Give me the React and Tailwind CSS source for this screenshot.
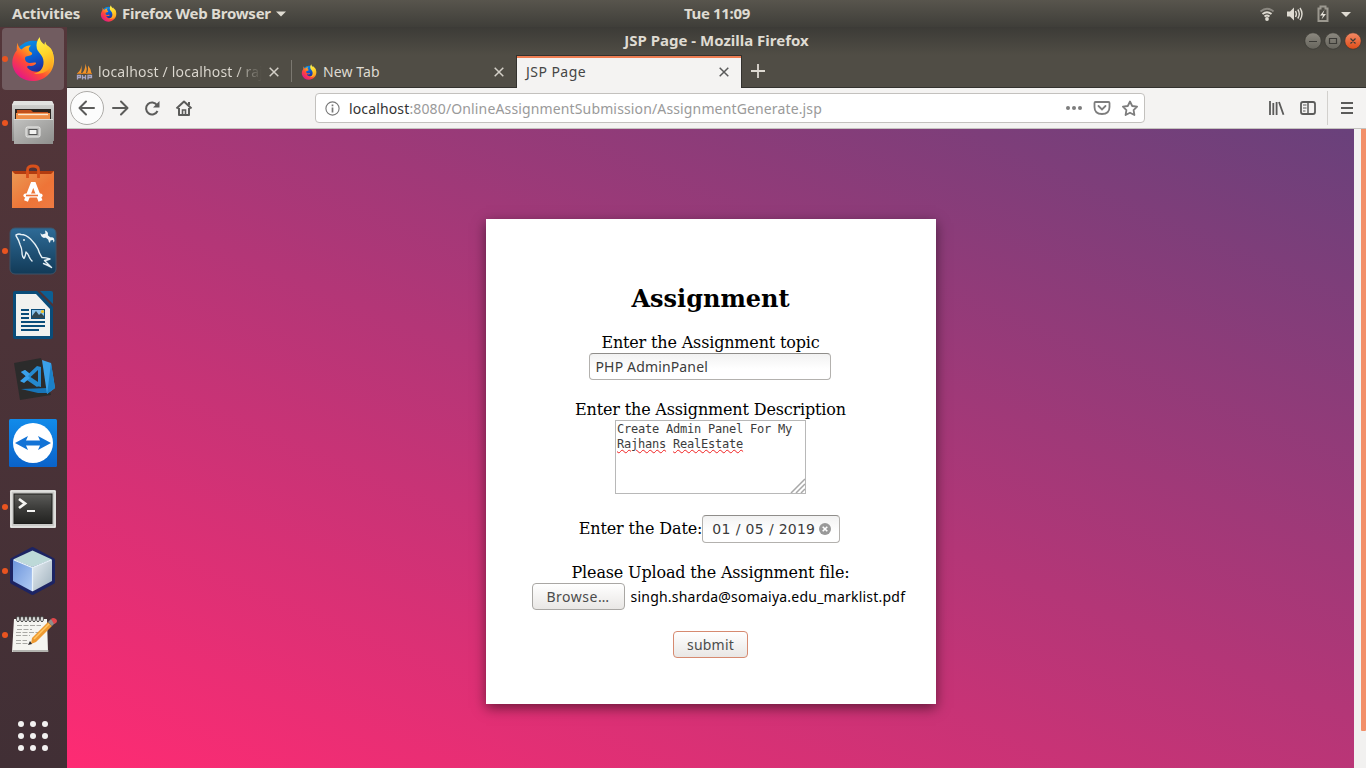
import React from "react";

const UI = "font-['Noto_Sans',sans-serif]";

function Firefox({ size, id }) {
  return (
    <svg width={size} height={size} viewBox="0 0 48 48" className="shrink-0">
      <defs>
        <linearGradient id={id + "a"} x1="0.85" y1="0.1" x2="0.15" y2="0.9">
          <stop offset="0" stopColor="#ffe836" />
          <stop offset="0.35" stopColor="#ffa01e" />
          <stop offset="0.62" stopColor="#ff4a36" />
          <stop offset="1" stopColor="#e3158a" />
        </linearGradient>
        <linearGradient id={id + "b"} x1="0.2" y1="0" x2="0.6" y2="1">
          <stop offset="0" stopColor="#0a96e8" />
          <stop offset="0.5" stopColor="#0a5cd0" />
          <stop offset="1" stopColor="#2b1a86" />
        </linearGradient>
        <linearGradient id={id + "c"} x1="0.3" y1="0" x2="0.6" y2="1">
          <stop offset="0" stopColor="#fff44f" />
          <stop offset="0.5" stopColor="#ffd42a" />
          <stop offset="1" stopColor="#ff9a1c" />
        </linearGradient>
      </defs>
      <circle cx="24" cy="24" r="19" fill={`url(#${id}b)`} />
      <path
        d="M8 7c-1 3-1 5-1 8C3 20 1.500 26 3 32c2.500 9 11 15 20.500 15C36 47 46 38 46 25c0-4-1-8-3-10 0 10-1 15-6 19-4 4-13 5-18 0-2-2-1-3 1-3 5 1 8-2 7-3-2-1-5 1-8 0-3-1-4-4-3-6 2-2 6-1 7-3 1-2-3-3-3-4-1-3 1-4 2-5-5-1-8 2-10 4-2-1-4-4-4-7z"
        fill={`url(#${id}a)`}
      />
      <path
        d="M31 1c-3 4-4 7-3 12 1 4 7 7 7 14 0 7-4 11-10 12 10 2 19-4 20-14 1-10-3-13-6-15-1-1-2-2-2-4-1 1-1 2-1 3-3-2-5-5-5-8z"
        fill={`url(#${id}c)`}
      />
    </svg>
  );
}

function Files() {
  return (
    <svg width="48" height="48" viewBox="0 0 48 48">
      <defs>
        <linearGradient id="fa" x1="0" y1="0" x2="0" y2="1">
          <stop offset="0" stopColor="#d6d6d4" />
          <stop offset="1" stopColor="#8c8c8a" />
        </linearGradient>
        <linearGradient id="fb" x1="0" y1="0" x2="1" y2="1">
          <stop offset="0" stopColor="#c2c2c0" />
          <stop offset="1" stopColor="#8f8f8d" />
        </linearGradient>
      </defs>
      <path d="M5 2h38l2 4v36H3V6z" fill="url(#fa)" />
      <path d="M5 2h38l2 4H3z" fill="#e2e2e0" />
      <path d="M6 10h36v12H6z" fill="#2b2522" />
      <path d="M8 11h14l2 2h15v7H8z" fill="#c14f1c" />
      <path d="M7 14h34v6H7z" fill="#ef8e48" />
      <path d="M9 15.500h30" stroke="#fbe9d4" strokeWidth="1.300" />
      <path d="M5 20h39v25H5z" fill="url(#fb)" />
      <path d="M5 20.500h39" stroke="#dcdcda" />
      <rect x="17" y="28" width="14" height="10" rx="1.500" fill="#bdbdbb" stroke="#ececea" strokeWidth="1" />
      <rect x="20" y="30.500" width="8" height="5" fill="#f2f2f0" stroke="#555" strokeWidth="1" />
    </svg>
  );
}

function Software() {
  return (
    <svg width="48" height="48" viewBox="0 0 48 48">
      <defs>
        <linearGradient id="sa" x1="0" y1="0" x2="1" y2="1">
          <stop offset="0" stopColor="#ea9a55" />
          <stop offset="0.6" stopColor="#ee7437" />
          <stop offset="1" stopColor="#ef7a43" />
        </linearGradient>
      </defs>
      <path d="M3 8h42v4H3z" fill="#b33c10" />
      <path d="M3 8l3 3h36l3-3v37H3z" fill="url(#sa)" />
      <path d="M18.500 15V7q0-4 5.500-4t5.500 4v8" fill="none" stroke="#d8501b" strokeWidth="2.800" />
      <path d="M17 38l6.500-17h1.500l6.500 17" fill="none" stroke="#fff" strokeWidth="4.200" />
      <path d="M16.500 32.500h15" stroke="#fff" strokeWidth="4.200" strokeLinecap="round" />
      <path d="M17 32.500h12" stroke="#ee7437" strokeWidth="1.600" />
    </svg>
  );
}

function MySql() {
  return (
    <svg width="48" height="48" viewBox="0 0 48 48">
      <defs>
        <linearGradient id="ma" x1="0" y1="0" x2="0" y2="1">
          <stop offset="0" stopColor="#2e6b97" />
          <stop offset="1" stopColor="#123a57" />
        </linearGradient>
      </defs>
      <rect x="1" y="1" width="46" height="46" rx="5" fill="url(#ma)" stroke="#3c5368" />
      <path
        d="M23 34q-2-2-3-4.500-1-3-3-4.500-0.500 4-2 6.500-2-2-2-6 0-4-2-8-1-4-3-7-2-3 0-3 2-1 4 0 5 0 9.500 4.500 5 5 7.500 10 1.500 5 4 8.500 4 0 8 1.500-3 1-5.500 1.500 3 3 7 7-4-2.500-8-4"
        fill="none"
        stroke="#e6f0f5"
        strokeWidth="1.400"
        strokeLinejoin="round"
        strokeLinecap="round"
      />
      <circle cx="15" cy="13" r="0.900" fill="#fff" />
      <path d="M36 8l5.500 4.500" stroke="#eef4f7" strokeWidth="3" />
      <path d="M36 3.500l0.500 3-3.500 1-1.500-1.500q0 4 3.500 5 4-0.500 4-4 0-2.500-3-3.500z" fill="#eef4f7" />
      <path d="M44.500 15.500l-0.500-2.500-2.500 0.500-0.500 2.500q-2.500-2-1-4.500 3-2.500 5 0 1 2-0.500 4z" fill="#eef4f7" />
    </svg>
  );
}

function Writer() {
  return (
    <svg width="48" height="48" viewBox="0 0 48 48">
      <path d="M6 0h22l16 16v30q0 2-2 2H6q-2 0-2-2V2q0-2 2-2z" fill="#0a4c79" />
      <path d="M31 0h11q2 0 2 2v11z" fill="#0d5f93" />
      <path d="M7 3h20l14 15v27H7z" fill="#f1f1ef" />
      <path d="M12 19h8M12 23h8M12 27h8M12 31h24M12 35h24M12 39h18" stroke="#0a4c79" strokeWidth="2" />
      <rect x="22.500" y="18.500" width="13" height="9" fill="#8cc4ea" stroke="#0a4c79" />
      <path d="M23 27v-2l4-5 3 4 2-2 3 3v2z" fill="#33474f" />
      <circle cx="33.500" cy="20.500" r="1.600" fill="#f3c321" />
    </svg>
  );
}

function Code() {
  return (
    <svg width="48" height="48" viewBox="0 0 48 48">
      <path d="M5 8L32 3l10 37-31 5z" fill="#2b2b2b" />
      <path d="M12 34l26-1 7-1-7 6-9 0z" fill="#1874b8" />
      <path d="M33 5l9 3 4 25-8 6z" fill="#3aa0ea" />
      <path d="M42 8l4 25-8 6 1-7z" fill="#1b80c8" />
      <path d="M12 17l4-2 16 12v5l-4-1zM12 26l16-15 4 1v17l-4 3-13-9-2 4z" fill="#2589cf" />
      <path d="M21.500 22l7.500-7v12z" fill="#2b2b2b" />
      <path d="M12 17l4-2 5 4-3 3zM11 26l7-6 3 3-6 5z" fill="#3aa0ea" />
    </svg>
  );
}

function TeamViewer() {
  return (
    <svg width="48" height="48" viewBox="0 0 48 48">
      <defs>
        <linearGradient id="ta" x1="0" y1="0" x2="0" y2="1">
          <stop offset="0" stopColor="#118bea" />
          <stop offset="1" stopColor="#0a62c9" />
        </linearGradient>
      </defs>
      <rect width="48" height="48" rx="1.500" fill="url(#ta)" />
      <circle cx="24" cy="24" r="20" fill="#fff" />
      <path d="M6 24l13-7-2 4.500h14L29 17l13 7-13 7 2-4.500H17l2 4.500z" fill="#1273d6" />
    </svg>
  );
}

function Terminal() {
  return (
    <svg width="48" height="48" viewBox="0 0 48 48">
      <defs>
        <linearGradient id="tb" x1="0" y1="0" x2="0" y2="1">
          <stop offset="0" stopColor="#5c5c5a" />
          <stop offset="0.500" stopColor="#3b3b39" />
          <stop offset="1" stopColor="#222220" />
        </linearGradient>
      </defs>
      <rect x="1" y="7" width="46" height="38" rx="1.500" fill="#c9c9c7" />
      <rect x="2" y="8" width="44" height="36" fill="none" stroke="#f2f2f0" />
      <rect x="5" y="11" width="38" height="29.500" fill="url(#tb)" stroke="#1c1c1b" />
      <path d="M10 16l6 4.500-6 4.500" fill="none" stroke="#f4f4f2" strokeWidth="2.800" />
      <path d="M18 28h8" stroke="#f4f4f2" strokeWidth="2" />
    </svg>
  );
}

function NetBeans() {
  return (
    <svg width="48" height="48" viewBox="0 0 48 48">
      <defs>
        <linearGradient id="na" x1="0" y1="0" x2="1" y2="1">
          <stop offset="0" stopColor="#6c94dc" />
          <stop offset="1" stopColor="#b3cdf3" />
        </linearGradient>
        <linearGradient id="nb" x1="0" y1="0" x2="1" y2="1">
          <stop offset="0" stopColor="#e6edf2" />
          <stop offset="1" stopColor="#9fb1bd" />
        </linearGradient>
      </defs>
      <path d="M23.500 2L44 13v22L23.500 46 3 35V13z" fill="#1d2463" stroke="#1d2463" strokeWidth="4" strokeLinejoin="round" />
      <path d="M23.500 3.500L43 12.500l-19.500 7.500L4 12.500z" fill="#bdd9d8" />
      <path d="M4 12.500l19.500 8V44.500L4 34z" fill="url(#na)" />
      <path d="M43 12.500l-19.500 8V44.500L43 34z" fill="url(#nb)" />
      <path d="M5 13l18.500 7.500L42 13M23.500 21v23" fill="none" stroke="#eaf3fa" strokeWidth="1.200" />
    </svg>
  );
}

function Notepad() {
  const rings = [9, 13, 17, 21, 25, 29, 33];
  return (
    <svg width="48" height="48" viewBox="0 0 48 48">
      <path d="M5 8h33l1 33H3z" fill="#f5f5f1" />
      <path d="M3.500 40h36" stroke="#9d9d99" strokeWidth="1.400" />
      {rings.map((x) => (
        <ellipse key={x} cx={x} cy="8" rx="1.400" ry="2.800" fill="#f8f8f8" stroke="#4d4d4b" strokeWidth="1" />
      ))}
      <path d="M8 14.500h24M8 18.500h15M7 21.500h22M7 24.500h14M7 29.500h11M7 32.500h14" stroke="#a9a9a5" strokeWidth="1" strokeDasharray="5 1.500" />
      <path d="M23 27L39 11l4 4-16 16-5 2z" fill="#ee9a31" />
      <path d="M25 28L40 13" stroke="#ffc766" strokeWidth="1.500" />
      <path d="M39 11l3-3 4 4-3 3z" fill="#8d8d8b" />
      <path d="M42 8q2-2 5 0 2 2 0 4l-2 1z" fill="#e0474c" />
      <path d="M21 30l-2 4 4-1z" fill="#2b2b2b" />
    </svg>
  );
}

const dock = [
  { el: <Firefox size={46} id="fd" />, dot: true, on: true },
  { el: <Files />, dot: true },
  { el: <Software /> },
  { el: <MySql />, dot: true },
  { el: <Writer /> },
  { el: <Code /> },
  { el: <TeamViewer /> },
  { el: <Terminal />, dot: true },
  { el: <NetBeans />, dot: true },
  { el: <Notepad />, dot: true },
];

function Dock() {
  return (
    <nav className="flex w-[67px] shrink-0 flex-col bg-linear-to-b from-[#54363a] to-[#412f35]">
      {dock.map((d, i) => (
        <div key={i} className="flex h-16 shrink-0 items-center pl-[2px]">
          <div
            className={
              d.on
                ? "flex h-[62px] w-[62px] items-center rounded-[4px] bg-[#715c60]"
                : "flex h-[62px] w-[62px] items-center"
            }
          >
            <span className={d.dot ? "h-[6px] w-[6px] shrink-0 rounded-full bg-[#e95420]" : "h-[6px] w-[6px] shrink-0"} />
            <span className="flex w-[50px] shrink-0 justify-center">{d.el}</span>
          </div>
        </div>
      ))}
      <svg width="67" height="40" viewBox="0 0 67 40" className="mt-[49px]">
        {[8, 20, 32].map((y) => [21, 33, 45].map((x) => <circle key={x + "-" + y} cx={x} cy={y} r="3" fill="#f2f1f0" />))}
      </svg>
    </nav>
  );
}

function TopBar() {
  return (
    <header className="flex h-[27px] shrink-0 items-center bg-linear-to-b from-[#58554d] to-[#3f3e39] text-[15px] leading-[20px] font-bold text-[#dfdbd2]">
      <div className="flex w-[684px] items-center whitespace-nowrap pl-3">
        <span className="mb-px w-[88px] tracking-[-0.150px]">Activities</span>
        <Firefox size={17} id="ft" />
        <span className="mb-px ml-[5px] w-[150px] tracking-[-0.250px]">Firefox Web Browser</span>
        <svg width="10" height="6" className="ml-[4px]">
          <path d="M0 0.500h10l-5 5z" fill="#dfdbd2" />
        </svg>
      </div>
      <span className="mb-px whitespace-nowrap tracking-[-0.350px]">Tue 11:09</span>
      <svg width="96" height="20" viewBox="1258 3 96 20" className="ml-auto mr-3" fill="none">
        <path d="M1260.500 10.500q6.500-5.500 13 0" stroke="#8a8780" strokeWidth="1.800" />
        <path d="M1262.500 13q4.500-3.600 9 0M1264.500 15.500q2.500-2 5 0" stroke="#dfdbd2" strokeWidth="1.800" />
        <circle cx="1267" cy="18" r="1.900" fill="#dfdbd2" />
        <path d="M1287 10.500h3l4-4v13l-4-4h-3z" fill="#dfdbd2" />
        <path d="M1295.500 10q1.800 3 0 6M1297.800 8.500q3 4.500 0 9M1300 7q4 6 0 12" stroke="#dfdbd2" strokeWidth="1.400" />
        <path d="M1318.500 7.500h2v-2h5v2h2V20h-9z" stroke="#9b988f" strokeWidth="2" />
        <path d="M1324.500 9l-4.500 5.500h3l-1.500 4 4.500-5.500h-3z" fill="#e6e2da" />
        <path d="M1341 11h10l-5 5z" fill="#dfdbd2" />
      </svg>
    </header>
  );
}

function Close({ color }) {
  return (
    <svg width="10" height="10" className="shrink-0">
      <path d="M0.700 0.700l8.600 8.600M9.300 0.700l-8.600 8.600" stroke={color} strokeWidth="1.500" />
    </svg>
  );
}

function TitleBar() {
  return (
    <div className="flex h-[28px] shrink-0 items-center bg-linear-to-b from-[#3c3b37] to-[#504d45]">
      <span className="w-[62px]" />
      <span className="mb-[2px] flex-1 text-center text-[15px] leading-[20px] font-bold text-[#dfdbd2]">JSP Page - Mozilla Firefox</span>
      <svg width="62" height="20" viewBox="1304 31 62 20" fill="none">
        <defs>
          <linearGradient id="wg" x1="0" y1="0" x2="0" y2="1">
            <stop offset="0" stopColor="#8c8980" />
            <stop offset="1" stopColor="#66645c" />
          </linearGradient>
          <linearGradient id="wo" x1="0" y1="0" x2="0" y2="1">
            <stop offset="0" stopColor="#f38a66" />
            <stop offset="1" stopColor="#df4c17" />
          </linearGradient>
        </defs>
        <circle cx="1313" cy="41" r="8.200" fill="url(#wg)" stroke="#33322e" strokeWidth="0.600" />
        <circle cx="1333" cy="41" r="8.200" fill="url(#wg)" stroke="#33322e" strokeWidth="0.600" />
        <circle cx="1353" cy="41" r="8.200" fill="url(#wo)" stroke="#33322e" strokeWidth="0.600" />
        <path d="M1309 41.500h8M1329.500 38.500h7v5h-7zM1350.500 38.500l5 5M1355.500 38.500l-5 5" stroke="#3c3b37" strokeWidth="1.200" />
      </svg>
    </div>
  );
}

function Tabs() {
  return (
    <div className="flex h-[33px] shrink-0 border-b border-[#33322e] bg-[#504d45] text-[14px] text-[#dedad2]">
      <div className="flex w-[224px] shrink-0 items-center pl-[9px] pt-px">
        <svg width="17" height="17" viewBox="0 0 17 17" className="shrink-0">
          <path d="M1 10.500q4-3 4.500-8.500 0.500 5-0.500 8.500zM6 10.500q3.500-4 3.500-10 2 5 0.500 10zM11 10.500q1.500-4 1-8 3 3 3.500 8z" fill="#f2942c" />
          <path d="M1 10.500h15" stroke="#d07a1e" strokeWidth="1" />
          <path d="M1.500 16.500v-4h3v2h-3M6.500 12v4.500M6.500 14.500h3M9.500 12v4.500M12 16.500v-4h3.500v2H12" fill="none" stroke="#a6a5c4" strokeWidth="1.300" />
        </svg>
        <span className="ml-[5px] w-[164px] whitespace-nowrap bg-linear-to-r from-[#dedad2] from-84% to-[#504d45] bg-clip-text tracking-[0.180px] text-transparent">
          localhost / localhost / raj
        </span>
        <span className="ml-[7px] flex"><Close color="#d4d0c8" /></span>
      </div>
      <div className="my-[5px] w-px bg-[#7b7870]" />
      <div className="flex w-[224px] shrink-0 items-center pl-[9px] pt-px">
        <Firefox size={16} id="fn" />
        <span className="ml-[6px] flex-1 tracking-[0.100px]">New Tab</span>
        <span className="mr-[12px] flex"><Close color="#d4d0c8" /></span>
      </div>
      <div className="-mb-px flex w-[226px] shrink-0 items-center border-x border-[#33322e] border-t bg-[#f4f3f2] pl-[9px] pr-[12px] text-[#454545] shadow-[inset_0_2px_0_#ee7d52]">
        <span className="mb-[2px] flex-1 tracking-[0.450px]">JSP Page</span>
        <Close color="#5a5a5a" />
      </div>
      <svg width="14" height="14" className="ml-[9px] mt-[9px]">
        <path d="M7 0v14M0 7h14" stroke="#dedad2" strokeWidth="1.800" />
      </svg>
    </div>
  );
}

function Toolbar() {
  return (
    <div className="flex h-[41px] shrink-0 items-center border-b border-[#c4c2bf] bg-[#f4f3f2]">
      <svg width="134" height="40" viewBox="67 88 134 40" fill="none" stroke="#5b5b5a" strokeWidth="2" className="shrink-0">
        <circle cx="87" cy="108" r="16.500" fill="#fcfcfc" stroke="#adaba8" strokeWidth="1" />
        <path d="M94 108H80M86 101.500l-6.500 6.500 6.500 6.500" strokeLinecap="round" strokeLinejoin="round" />
        <path d="M113 108h14M121 101.500l6.500 6.500-6.500 6.500" strokeLinecap="round" strokeLinejoin="round" />
        <path d="M157.500 111a6 6 0 1 1-.500-6" />
        <path d="M159.500 101v6.500H153z" fill="#5b5b5a" stroke="none" />
        <path d="M176.500 108.500l7.500-7 7.500 7M179 108v7h10v-7M189 102v3" strokeLinejoin="round" />
        <path d="M182.500 115v-5h3v5" strokeWidth="1.600" />
      </svg>
      <div className="ml-[114px] flex h-[30px] w-[830px] shrink-0 items-center rounded-[4px] border border-[#c3c1be] bg-white pl-[9px] text-[14px] text-[#9a9a9a]">
        <svg width="15" height="15" fill="none" className="shrink-0">
          <circle cx="7.500" cy="7.500" r="6.600" stroke="#777" strokeWidth="1.100" />
          <path d="M7.500 6.500v5M7.500 3.500v1.700" stroke="#777" strokeWidth="1.700" />
        </svg>
        <span className="ml-[9px] whitespace-nowrap tracking-[0.140px]">
          <span className="text-[#333]">localhost</span>:8080/OnlineAssignmentSubmission/AssignmentGenerate.jsp
        </span>
        <svg width="76" height="20" viewBox="1064 98 76 20" fill="none" stroke="#7d7d7d" strokeWidth="1.800" className="ml-auto mr-[4px] shrink-0">
          <g fill="#7d7d7d" stroke="none">
            <circle cx="1068" cy="108" r="2" />
            <circle cx="1074" cy="108" r="2" />
            <circle cx="1080" cy="108" r="2" />
          </g>
          <path d="M1095.500 102h13q1 0 1 1v4q0 7-7.500 7t-7.500-7v-4q0-1 1-1z" />
          <path d="M1098.500 106l3.500 3.400 3.500-3.400" strokeLinecap="round" />
          <path d="M1130 101.500l2.200 4.500 4.900.700-3.500 3.400.800 4.900-4.400-2.300-4.400 2.300.800-4.900-3.500-3.400 4.900-.700z" strokeWidth="1.800" strokeLinejoin="round" />
        </svg>
      </div>
      <svg width="100" height="40" viewBox="1266 88 100 40" fill="none" stroke="#5b5b5a" strokeWidth="1.800" className="ml-auto shrink-0">
        <path d="M1270 101v14M1273.300 103v12M1276.600 102v13M1279 102l4.500 12.800" />
        <rect x="1301" y="102" width="14" height="12" rx="2" />
        <path d="M1308 102v12" strokeWidth="1.500" />
        <path d="M1303 105h3.500M1303 108h3.500M1303 111h2.500" strokeWidth="1" />
        <path d="M1327.500 91v34" stroke="#d2d0cd" strokeWidth="1" />
        <path d="M1341 103h12M1341 108h12M1341 113h12" strokeWidth="2" />
      </svg>
    </div>
  );
}

function Misspelt({ children }) {
  return (
    <span className="underline decoration-[#f02020] decoration-wavy decoration-1 underline-offset-[1px]">{children}</span>
  );
}

function FormCard() {
  return (
    <form className="flex h-[485px] w-[450px] flex-col items-center bg-white pt-[66px] font-['DejaVu_Serif',serif] text-[16px] leading-[19px] text-black shadow-[0_4px_12px_rgba(0,0,0,0.500)]" onSubmit={(e) => e.preventDefault()}>
      <h2 className="h-[28px] text-[24px] leading-[28px] font-bold">Assignment</h2>
      <label className="mt-[20px] tracking-[-0.160px]">Enter the Assignment topic</label>
      <input
        defaultValue="PHP AdminPanel"
        className="mr-[2px] mt-px h-[27px] w-[242px] rounded-[4px] border border-[#b3b1ae] border-t-[#8f8d8a] bg-linear-to-b from-[#f2f2f2] to-white to-60% px-[6px] font-['Noto_Sans',sans-serif] text-[14px] tracking-[0.150px] text-[#3c3c3c] outline-none"
      />
      <label className="mt-[20px] tracking-[-0.160px]">Enter the Assignment Description</label>
      <div className="relative mt-px h-[74px] w-[191px] border border-[#b8b8b8] px-px pt-px font-['DejaVu_Sans_Mono',monospace] text-[12px] leading-[15px] tracking-[-0.220px] whitespace-nowrap text-[#3c3c3c]">
        Create Admin Panel For My
        <br />
        <Misspelt>Rajhans</Misspelt> <Misspelt>RealEstate</Misspelt>
        <svg width="15" height="15" className="absolute right-0 bottom-0">
          <path d="M1 15L15 1M6 15l9-9M11 15l4-4" stroke="#a8a8a8" strokeWidth="1.500" />
        </svg>
      </div>
      <div className="mt-[21px] mr-[2px] flex h-[28px] items-center">
        <label className="mb-[2px] tracking-[-0.130px]">Enter the Date:</label>
        <div className="flex h-[28px] w-[138px] items-center rounded-[4px] border border-[#b3b1ae] border-t-[#8f8d8a] bg-linear-to-b from-[#f2f2f2] to-white to-60% pl-[9px] font-['DejaVu_Sans',sans-serif] text-[14px] text-[#3c3c3c]">
          <span className="tracking-[0.200px]">01</span>
          <span className="w-[15px] text-center">/</span>
          <span className="tracking-[0.200px]">05</span>
          <span className="w-[15px] text-center">/</span>
          <span className="tracking-[0.200px]">2019</span>
          <svg width="12" height="12" className="mb-px ml-[4px] shrink-0">
            <circle cx="6" cy="6" r="6" fill="#999" />
            <path d="M3.700 3.700l4.600 4.600M8.300 3.700l-4.600 4.600" stroke="#fff" strokeWidth="1.600" />
          </svg>
        </div>
      </div>
      <label className="mt-[20px] tracking-[-0.160px]">Please Upload the Assignment file:</label>
      <div className="mt-px flex w-[358px] items-center font-['Noto_Sans',sans-serif] text-[14px]">
        <button type="button" className="h-[27px] w-[93px] shrink-0 rounded-[4px] border border-[#a9a7a4] bg-linear-to-b from-white to-[#e9e7e5] tracking-[0.500px] text-[#4c4c4c]">
          Browse…
        </button>
        <span className="ml-[6px] whitespace-nowrap tracking-[0.220px]">singh.sharda@somaiya.edu_marklist.pdf</span>
      </div>
      <button type="submit" className="mt-[21px] h-[27px] w-[75px] rounded-[4px] border border-[#d68a70] bg-linear-to-b from-white to-[#e9e7e5] pb-px font-['Noto_Sans',sans-serif] text-[14px] tracking-[0.200px] text-[#4c4c4c]">
        submit
      </button>
    </form>
  );
}

export default function App() {
  return (
    <div className={"flex h-[768px] w-[1366px] flex-col overflow-hidden " + UI}>
      <TopBar />
      <div className="flex min-h-0 flex-1">
        <Dock />
        <div className="flex min-w-0 flex-1 flex-col">
          <TitleBar />
          <Tabs />
          <Toolbar />
          <div className="flex min-h-0 flex-1">
            <main className="flex flex-1 justify-center bg-[linear-gradient(22.5deg,#fe2b73,#69417b)] pt-[90px]">
              <FormCard />
            </main>
            <div className="flex w-[12px] shrink-0 justify-end bg-[#f2f1f0]">
              <div className="h-[602px] w-[5px] rounded-b-[1px] bg-[#f28f68]" />
            </div>
          </div>
        </div>
      </div>
    </div>
  );
}
